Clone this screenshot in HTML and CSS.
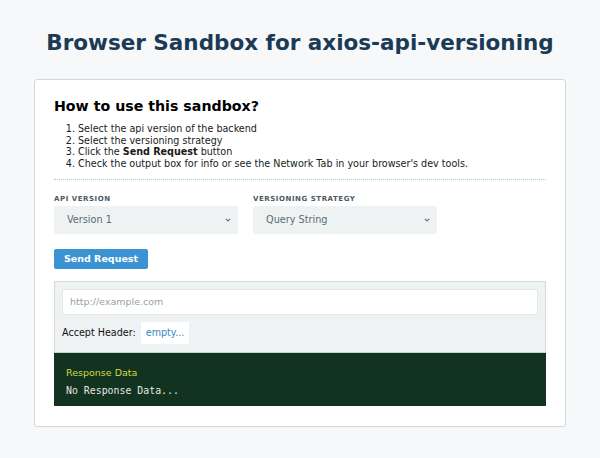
FILE: index.html
```html
<!DOCTYPE html>
<html>
<head>
<meta charset="utf-8">
<link rel="stylesheet" href="styles.css">
</head>
<body>
<h1 class="title">Browser Sandbox for axios-api-versioning</h1>
<div class="card">
  <h2 class="howto">How to use this sandbox?</h2>
  <ol class="steps">
    <li>Select the api version of the backend</li>
    <li>Select the versioning strategy</li>
    <li>Click the <b>Send Request</b> button</li>
    <li>Check the output box for info or see the Network Tab in your browser's dev tools.</li>
  </ol>
  <hr class="sep">
  <div class="fields">
    <div class="field">
      <div class="label">API VERSION</div>
      <div class="select"><span>Version 1</span><svg width="8" height="6" viewBox="0 0 8 6"><path d="M1.8 1.8 L4 4 L6.2 1.8" fill="none" stroke="#6b7780" stroke-width="1.2"/></svg></div>
    </div>
    <div class="field">
      <div class="label">VERSIONING STRATEGY</div>
      <div class="select"><span>Query String</span><svg width="8" height="6" viewBox="0 0 8 6"><path d="M1.8 1.8 L4 4 L6.2 1.8" fill="none" stroke="#6b7780" stroke-width="1.2"/></svg></div>
    </div>
  </div>
  <button class="send">Send Request</button>
  <div class="output">
    <div class="output-top">
      <div class="url">http://example.com</div>
      <div class="accept"><span class="accept-label">Accept Header:</span><span class="accept-val">empty...</span></div>
    </div>
    <div class="response">
      <div class="resp-title">Response Data</div>
      <div class="resp-body">No Response Data...</div>
    </div>
  </div>
</div>
</body>
</html>
```
FILE: styles.css
```css
* { box-sizing: border-box; }
html, body { margin: 0; padding: 0; }
body {
  background: #f7f8f9;
  font-family: "DejaVu Sans", sans-serif;
  color: #1c1c1c;
  padding: 0 34px;
}
.title {
  margin: 0;
  padding-top: 29px;
  height: 79px;
  text-align: center;
  font-size: 21.5px;
  font-weight: bold;
  color: #1b3a55;
  line-height: 28px;
}
.card {
  background: #fff;
  border: 1px solid #d2d8dc;
  border-radius: 3px;
  padding: 15px 19px 19px;
  height: 348px;
}
.howto {
  margin: 0;
  font-size: 14.2px;
  line-height: 22px;
  font-weight: bold;
  color: #000;
}
.steps {
  margin: 6px 0 0;
  padding-left: 24px;
  font-size: 9.6px;
  line-height: 11.7px;
  color: #1a1a1a;
}
.sep {
  margin: 9px 0 0;
  border: 0;
  border-top: 1px dotted #9fcbe8;
  height: 0;
}
.fields {
  display: flex;
  gap: 15px;
  margin-top: 14px;
}
.field { width: 184px; }
.label {
  font-size: 7px;
  font-weight: bold;
  letter-spacing: 0.55px;
  color: #4d5862;
  line-height: 10px;
  margin-bottom: 2px;
}
.select {
  height: 28px;
  background: #eef2f3;
  border-radius: 2px;
  display: flex;
  align-items: center;
  justify-content: space-between;
  padding: 0 4px 0 13px;
  font-size: 9.7px;
  color: #5c6a74;
}
.select svg { margin-right: 2px; }
.send {
  display: block;
  margin-top: 15px;
  height: 20px;
  width: 94px;
  padding: 0;
  border: 0;
  border-radius: 2px;
  background: #3b93d4;
  color: #fff;
  font-family: "DejaVu Sans", sans-serif;
  font-weight: bold;
  font-size: 9.5px;
}
.output {
  margin-top: 12px;
  border-top: 1px solid #d4dadd;
}
.output-top {
  background: #eef2f3;
  border: 1px solid #d4dadd;
  border-top: 0;
  border-bottom: 1px solid #c5cfd2;
  padding: 7px 7px 8px;
}
.url {
  height: 26px;
  background: #fff;
  border: 1px solid #e3e8ea;
  border-radius: 2px;
  font-size: 9.5px;
  line-height: 24px;
  color: #9aa0a4;
  padding-left: 7px;
}
.accept {
  display: flex;
  align-items: center;
  margin-top: 7px;
  font-size: 9.6px;
  color: #111;
}
.accept-label { margin-right: 5px; }
.accept-val {
  background: #fff;
  height: 22px;
  line-height: 22px;
  padding: 0 5px;
  color: #3d86bf;
  border-radius: 1px;
}
.response {
  background: #12331f;
  height: 53px;
  padding: 13px 12px;
}
.resp-title {
  font-size: 9.5px;
  color: #d6d944;
  line-height: 13px;
}
.resp-body {
  margin-top: 5px;
  font-family: "DejaVu Sans Mono", monospace;
  font-size: 9.9px;
  color: #e3e7e4;
  line-height: 13px;
}
```
